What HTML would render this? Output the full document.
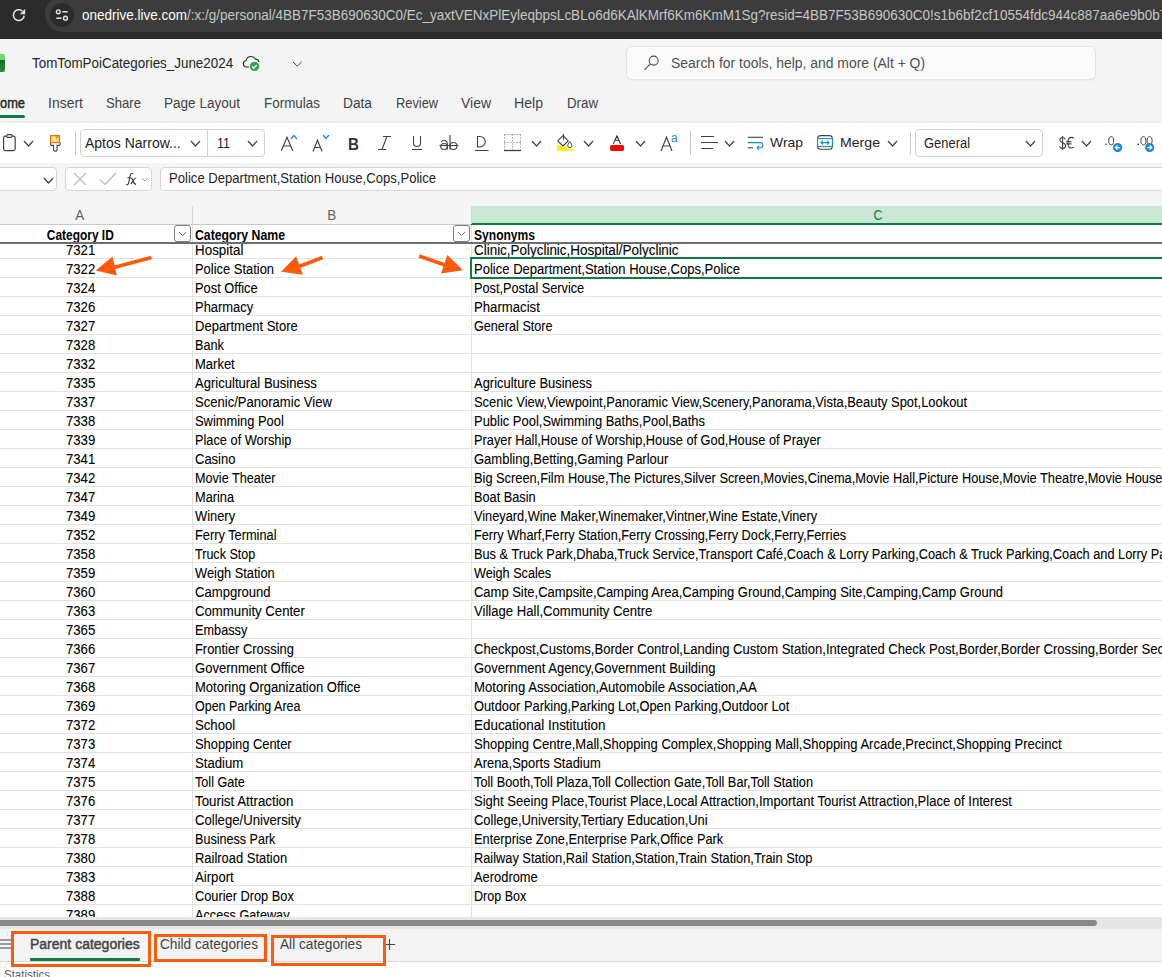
<!DOCTYPE html><html><head><meta charset="utf-8"><style>*{margin:0;padding:0}
html,body{width:1162px;height:977px;overflow:hidden;background:#f5f5f5;font-family:"Liberation Sans",sans-serif;position:relative}
.b{position:absolute}
.t{position:absolute;white-space:nowrap;line-height:1;transform-origin:0 0}
.g .t{-webkit-text-stroke:0.1px #000}
</style></head><body>
<div class="b" style="left:0px;top:0px;width:1162px;height:39px;background:#2b2b2b"></div>
<div class="b" style="left:45px;top:-4px;width:1200px;height:36px;background:#3c3c3c;border-radius:18px"></div>
<div class="b" style="left:50px;top:3px;width:24px;height:24px;background:#2b2b2b;border-radius:12px"></div>
<svg class="b" style="left:11px;top:7px" width="16" height="16" viewBox="0 0 16 16"><path d="M13.2 8.6a5.4 5.4 0 1 1 -1.9-4.6" fill="none" stroke="#e3e3e3" stroke-width="1.5"/><path d="M14.2 1.8v5.4h-5.4z" fill="#e3e3e3"/></svg>
<svg class="b" style="left:54px;top:7px" width="16" height="16" viewBox="0 0 16 16"><circle cx="4.3" cy="4.8" r="1.9" fill="none" stroke="#e3e3e3" stroke-width="1.4"/><path d="M8.3 4.8h5.4" stroke="#e3e3e3" stroke-width="1.5"/><circle cx="11.5" cy="11.2" r="1.9" fill="none" stroke="#e3e3e3" stroke-width="1.4"/><path d="M2.3 11.2h5.3" stroke="#e3e3e3" stroke-width="1.5"/></svg>
<div class="t" style="left:82px;top:8.35px;font-size:14px;color:#c4c7c5;transform:scaleX(0.964)"><span style="color:#fff">onedrive.live.com</span>/:x:/g/personal/4BB7F53B690630C0/Ec_yaxtVENxPlEyleqbpsLcBLo6d6KAlKMrf6Km6KmM1Sg?resid=4BB7F53B690630C0!s1b6bf2cf10554fdc944c887aa6e9b0b7</div>
<div class="b" style="left:0px;top:39px;width:1162px;height:84px;background:#f4f4f4"></div>
<div class="b" style="left:0px;top:54px;width:5px;height:18px;background:linear-gradient(#6fd96f 0,#6fd96f 33%,#1a6b2c 34%,#2f8f3f 100%);border-radius:0 2px 2px 0"></div>
<div class="t" style="left:32px;top:56.15px;font-size:14px;color:#242424;transform:scaleX(0.9570);">TomTomPoiCategories_June2024</div>
<svg class="b" style="left:240px;top:53px" width="22" height="20" viewBox="240 53 22 20"><path d="M249 67H246.6a3.3 3.3 0 0 1 -0.5-6.55a5 5 0 0 1 9.3-1.3a3.4 3.4 0 0 1 3.4 2.9" fill="none" stroke="#2a2a2a" stroke-width="1.1"/><circle cx="254.5" cy="66.4" r="4.7" fill="#34a551"/><path d="M252.2 66.5l1.6 1.6l2.9-3.1" fill="none" stroke="#fff" stroke-width="1.2"/></svg>
<svg class="b" style="left:292px;top:61px" width="11" height="7" viewBox="0 0 11 7"><path d="M1 1l4.3 4.2 4.3-4.2" fill="none" stroke="#424242" stroke-width="1"/></svg>
<div class="b" style="left:627px;top:47px;width:468px;height:32px;background:#fafafa;border-radius:5px;box-shadow:0 0 0 1px #e3e3e3,0 1px 2px rgba(0,0,0,0.12)"></div>
<svg class="b" style="left:640px;top:52px" width="20" height="20" viewBox="640 52 20 20"><circle cx="653.7" cy="60.6" r="4.5" fill="none" stroke="#4a4a4a" stroke-width="1.05"/><path d="M650.4 63.9L644.4 69.9" stroke="#4a4a4a" stroke-width="1.05"/></svg>
<div class="t" style="left:671px;top:56.15px;font-size:14px;color:#505050;transform:scaleX(0.9940);">Search for tools, help, and more (Alt + Q)</div>
<div class="t" style="left:0px;top:96.15px;font-size:14px;color:#242424;transform:scaleX(0.9185);-webkit-text-stroke:0.45px #242424;">ome</div>
<div class="t" style="left:48px;top:96.15px;font-size:14px;color:#424242;">Insert</div>
<div class="t" style="left:106px;top:96.15px;font-size:14px;color:#424242;transform:scaleX(0.9372);">Share</div>
<div class="t" style="left:164px;top:96.15px;font-size:14px;color:#424242;transform:scaleX(0.9670);">Page Layout</div>
<div class="t" style="left:264px;top:96.15px;font-size:14px;color:#424242;transform:scaleX(0.9603);">Formulas</div>
<div class="t" style="left:343px;top:96.15px;font-size:14px;color:#424242;transform:scaleX(0.9810);">Data</div>
<div class="t" style="left:396px;top:96.15px;font-size:14px;color:#424242;transform:scaleX(0.9152);">Review</div>
<div class="t" style="left:461px;top:96.15px;font-size:14px;color:#424242;">View</div>
<div class="t" style="left:514px;top:96.15px;font-size:14px;color:#424242;transform:scaleX(1.0076);">Help</div>
<div class="t" style="left:567px;top:96.15px;font-size:14px;color:#424242;transform:scaleX(0.9493);">Draw</div>
<div class="b" style="left:0px;top:115px;width:25px;height:3px;background:#107c41;border-radius:0 2px 2px 0"></div>
<div class="b" style="left:0px;top:123px;width:1162px;height:40px;background:#fff;box-shadow:0 1px 3px rgba(0,0,0,0.22)"></div>
<svg class="b" style="left:2px;top:133px" width="16" height="19" viewBox="0 0 16 19"><rect x="1.6" y="3.2" width="11.6" height="14.4" rx="1.8" fill="none" stroke="#424242" stroke-width="1.2"/><rect x="4.6" y="1.6" width="5.6" height="2.8" rx="1.4" fill="#fff" stroke="#424242" stroke-width="1.1"/></svg>
<svg class="b" style="left:23px;top:140px" width="11" height="7" viewBox="0 0 11 7"><path d="M1 1L5.5 6L10 1" fill="none" stroke="#424242" stroke-width="1.2"/></svg>
<svg class="b" style="left:48px;top:133px" width="14" height="20" viewBox="48 133 14 20"><path d="M50.5 142.6v1.6a1.2 1.2 0 0 0 1.2 1.2h1.9v4.4a1.3 1.3 0 0 0 1.3 1.3h0.9a1.3 1.3 0 0 0 1.3-1.3v-4.4h1.9a1.2 1.2 0 0 0 1.2-1.2v-1.6" fill="#fff" stroke="#424242" stroke-width="1.1"/><rect x="50.6" y="135.6" width="8.9" height="7" fill="#f8df8e" stroke="#e27600" stroke-width="1.2"/><path d="M56.3 135.6v3.3M58 135.6v2.2" stroke="#e27600" stroke-width="0.9"/></svg>
<div class="b" style="left:75px;top:131px;width:1px;height:24px;background:#c8c8c8"></div>
<div class="b" style="left:80px;top:129px;width:185px;height:28px;border:1px solid #d1d1d1;border-radius:4px;box-sizing:border-box;background:#fff"></div>
<div class="b" style="left:207px;top:130px;width:1px;height:26px;background:#d1d1d1"></div>
<div class="t" style="left:85px;top:136.15px;font-size:14px;color:#242424;">Aptos Narrow...</div>
<svg class="b" style="left:190px;top:140px" width="11" height="7" viewBox="0 0 11 7"><path d="M1 1L5.5 6L10 1" fill="none" stroke="#424242" stroke-width="1.2"/></svg>
<div class="t" style="left:217px;top:136.15px;font-size:14px;color:#242424;transform:scaleX(0.8946);">11</div>
<svg class="b" style="left:247px;top:140px" width="11" height="7" viewBox="0 0 11 7"><path d="M1 1L5.5 6L10 1" fill="none" stroke="#424242" stroke-width="1.2"/></svg>
<svg class="b" style="left:280px;top:136px" width="14" height="16" viewBox="0 0 14 16"><path d="M1.2 15L7 1.2L12.8 15M3.3 10h7.4" fill="none" stroke="#424242" stroke-width="1.15"/></svg>
<svg class="b" style="left:290px;top:134px" width="8" height="6" viewBox="0 0 8 6"><path d="M1 5L4 1.5L7 5" fill="none" stroke="#1e88d8" stroke-width="1.3"/></svg>
<svg class="b" style="left:312px;top:139px" width="11" height="13" viewBox="0 0 11 13"><path d="M1 12.5L5.5 1.2L10 12.5M2.7 8.5h5.6" fill="none" stroke="#424242" stroke-width="1.15"/></svg>
<svg class="b" style="left:322px;top:134px" width="8" height="6" viewBox="0 0 8 6"><path d="M1 1L4 4.5L7 1" fill="none" stroke="#1e88d8" stroke-width="1.3"/></svg>
<div class="t" style="left:348px;top:135.61px;font-size:17px;font-weight:bold;color:#333;transform:scaleX(0.8957);">B</div>
<svg class="b" style="left:377px;top:135px" width="15" height="16" viewBox="0 0 15 16"><path d="M6 1.5h8M1 14.5h8M10 1.5L5 14.5" fill="none" stroke="#424242" stroke-width="1.1"/></svg>
<svg class="b" style="left:411px;top:135px" width="12" height="16" viewBox="0 0 12 16"><path d="M2.5 1v7a3.5 3.5 0 0 0 7 0V1" fill="none" stroke="#424242" stroke-width="1.1"/><path d="M1 14.5h10" stroke="#424242" stroke-width="1"/></svg>
<svg class="b" style="left:439px;top:134px" width="20" height="17" viewBox="0 0 20 17"><path d="M2.3 8a3.2 3.2 0 0 1 6 1.5v6" fill="none" stroke="#424242" stroke-width="1.1"/><ellipse cx="5" cy="12.5" rx="3.3" ry="3" fill="none" stroke="#424242" stroke-width="1.1"/><path d="M11 1v14.5" fill="none" stroke="#424242" stroke-width="1.1"/><ellipse cx="14.5" cy="12" rx="3.5" ry="3.5" fill="none" stroke="#424242" stroke-width="1.1"/><path d="M0.5 11.5h19" stroke="#424242" stroke-width="1.1"/></svg>
<svg class="b" style="left:474px;top:134px" width="16" height="18" viewBox="0 0 16 18"><path d="M3.5 2.5h2.5a4.6 4.6 0 0 1 0 10.5h-2.5z" fill="none" stroke="#424242" stroke-width="1.1"/><path d="M1 16.5h13.5" stroke="#424242" stroke-width="1"/></svg>
<svg class="b" style="left:503px;top:133px" width="19" height="19" viewBox="0 0 19 19"><path d="M1.5 1.5h16M1.5 9.5h16M1.5 1.5v16M9.5 1.5v16M17.5 1.5v16" fill="none" stroke="#707070" stroke-width="1" stroke-dasharray="1 2"/><path d="M1 17.5h17" stroke="#424242" stroke-width="1.3"/></svg>
<svg class="b" style="left:531px;top:140px" width="11" height="7" viewBox="0 0 11 7"><path d="M1 1L5.5 6L10 1" fill="none" stroke="#424242" stroke-width="1.2"/></svg>
<svg class="b" style="left:554px;top:132px" width="22" height="21" viewBox="554 132 22 21"><rect x="557" y="145" width="16" height="6" rx="1.5" fill="#ffef00"/><path d="M557.8 140.8L563 135.6L568.2 140.8L563 146z" fill="#fff" stroke="#fff" stroke-width="3" stroke-linejoin="round"/><path d="M569.8 141.6c-1.2 1.8-2.1 2.9-2.1 4a2.1 2.1 0 0 0 4.2 0c0-1.1-.9-2.2-2.1-4z" fill="#fff" stroke="#fff" stroke-width="3"/><path d="M557.8 140.8L563 135.6L568.2 140.8L563 146z" fill="none" stroke="#424242" stroke-width="1.1" stroke-linejoin="round"/><path d="M563.5 133.8v6" stroke="#424242" stroke-width="1.1"/><path d="M569.8 141.6c-1.2 1.8-2.1 2.9-2.1 4a2.1 2.1 0 0 0 4.2 0c0-1.1-.9-2.2-2.1-4z" fill="none" stroke="#424242" stroke-width="1"/></svg>
<svg class="b" style="left:583px;top:140px" width="11" height="7" viewBox="0 0 11 7"><path d="M1 1L5.5 6L10 1" fill="none" stroke="#424242" stroke-width="1.2"/></svg>
<svg class="b" style="left:609px;top:133px" width="16" height="19" viewBox="0 0 16 19"><path d="M4.5 10.4L7.9 2.7L11.4 10.4M6 7.3h3.9" fill="none" stroke="#333" stroke-width="1.1" stroke-linecap="round" stroke-linejoin="round"/><rect x="1.1" y="12.1" width="13.9" height="5.8" rx="1.6" fill="#ff0000"/></svg>
<svg class="b" style="left:635px;top:140px" width="11" height="7" viewBox="0 0 11 7"><path d="M1 1L5.5 6L10 1" fill="none" stroke="#424242" stroke-width="1.2"/></svg>
<svg class="b" style="left:660px;top:136px" width="13" height="16" viewBox="0 0 13 16"><path d="M1 15L6.5 1.2L12 15M3 10h7" fill="none" stroke="#424242" stroke-width="1.15"/></svg>
<div class="t" style="left:671.3px;top:132.14px;font-size:12px;color:#1e88d8;transform:scaleX(0.9742);">a</div>
<div class="b" style="left:690px;top:131px;width:1px;height:24px;background:#c8c8c8"></div>
<svg class="b" style="left:700px;top:134px" width="20" height="17" viewBox="0 0 20 17"><path d="M1 2.5h13M1 8.5h17M1 14.5h12" stroke="#424242" stroke-width="1.2"/></svg>
<svg class="b" style="left:724px;top:140px" width="11" height="7" viewBox="0 0 11 7"><path d="M1 1L5.5 6L10 1" fill="none" stroke="#424242" stroke-width="1.2"/></svg>
<svg class="b" style="left:744px;top:132px" width="22" height="20" viewBox="744 132 22 20"><path d="M747.7 137.3h15.4" stroke="#424242" stroke-width="1.1"/><path d="M747.7 142.6h12.6a2.6 2.6 0 0 1 0 5.2h-2.8" fill="none" stroke="#1e88d8" stroke-width="1.1"/><path d="M759 145.9l-1.9 1.9l1.9 1.9" fill="none" stroke="#1e88d8" stroke-width="1.1"/><path d="M747.7 147.8h5.2" stroke="#424242" stroke-width="1.1"/></svg>
<div class="t" style="left:770px;top:136.07px;font-size:13.5px;color:#242424;transform:scaleX(1.0307);">Wrap</div>
<svg class="b" style="left:815px;top:133px" width="20" height="19" viewBox="815 133 20 19"><rect x="817.6" y="135.6" width="14.8" height="13.6" rx="3" fill="none" stroke="#424242" stroke-width="1.05"/><rect x="817.6" y="138.6" width="14.8" height="7.9" fill="#fff" stroke="#1e88d8" stroke-width="1.1"/><path d="M821 142.6h8M822.9 140.7l-1.9 1.9l1.9 1.9M827.1 140.7l1.9 1.9l-1.9 1.9" fill="none" stroke="#1e88d8" stroke-width="1.1"/></svg>
<div class="t" style="left:840px;top:136.07px;font-size:13.5px;color:#242424;transform:scaleX(1.0445);">Merge</div>
<svg class="b" style="left:887px;top:140px" width="11" height="7" viewBox="0 0 11 7"><path d="M1 1L5.5 6L10 1" fill="none" stroke="#424242" stroke-width="1.2"/></svg>
<div class="b" style="left:910px;top:132px;width:1px;height:22px;background:#c8c8c8"></div>
<div class="b" style="left:915px;top:129px;width:128px;height:28px;border:1px solid #d1d1d1;border-radius:4px;box-sizing:border-box;background:#fff"></div>
<div class="t" style="left:924px;top:136.15px;font-size:14px;color:#242424;transform:scaleX(0.9240);">General</div>
<svg class="b" style="left:1025px;top:140px" width="11" height="7" viewBox="0 0 11 7"><path d="M1 1L5.5 6L10 1" fill="none" stroke="#424242" stroke-width="1.2"/></svg>
<svg class="b" style="left:1056px;top:133px" width="22" height="20" viewBox="1056 133 22 20"><path d="M1065.3 139.3c-0.5-1.2-1.5-1.8-2.8-1.8c-1.6 0-2.7 1-2.7 2.4c0 3.3 5.8 2.2 5.8 5.8c0 1.6-1.2 2.7-3 2.7c-1.4 0-2.5-0.7-3.1-2M1062.6 136v14" fill="none" stroke="#424242" stroke-width="1.1"/><path d="M1074 138.3c-0.7-0.6-1.5-0.9-2.4-0.9c-2.3 0-3.8 2.1-3.8 5.3s1.5 5.3 3.8 5.3c0.9 0 1.7-0.3 2.4-0.9M1066.3 141.6h5.2M1066.3 143.9h5.2" fill="none" stroke="#424242" stroke-width="1.1"/></svg>
<svg class="b" style="left:1081px;top:140px" width="11" height="7" viewBox="0 0 11 7"><path d="M1 1L5.5 6L10 1" fill="none" stroke="#424242" stroke-width="1.2"/></svg>
<svg class="b" style="left:1100px;top:132px" width="62" height="22" viewBox="1100 132 62 22"><circle cx="1106" cy="144.3" r="0.9" fill="#424242"/><ellipse cx="1111.2" cy="140.8" rx="2.5" ry="4.1" fill="none" stroke="#424242" stroke-width="1"/><circle cx="1138.2" cy="144.3" r="0.9" fill="#424242"/><ellipse cx="1143.4" cy="140.8" rx="2.5" ry="4.1" fill="none" stroke="#424242" stroke-width="1"/><ellipse cx="1149.6" cy="140.8" rx="2.5" ry="4.1" fill="none" stroke="#424242" stroke-width="1"/><circle cx="1117.6" cy="147.6" r="4.6" fill="#1e88d8"/><path d="M1120 147.6h-4.6M1117.5 145.5l-2.1 2.1l2.1 2.1" fill="none" stroke="#fff" stroke-width="1.1"/><circle cx="1149.6" cy="147.6" r="4.6" fill="#1e88d8"/><path d="M1147.2 147.6h4.6M1149.7 145.5l2.1 2.1l-2.1 2.1" fill="none" stroke="#fff" stroke-width="1.1"/></svg>
<div class="b" style="left:0px;top:163px;width:1162px;height:28px;background:#f5f5f5"></div>
<div class="b" style="left:-10px;top:167px;width:67px;height:24px;border:1px solid #d6d6d6;border-radius:4px;box-sizing:border-box;background:#fff"></div>
<svg class="b" style="left:43px;top:177px" width="11" height="7" viewBox="0 0 11 7"><path d="M1 1L5.5 6L10 1" fill="none" stroke="#424242" stroke-width="1.2"/></svg>
<div class="b" style="left:65px;top:167px;width:87px;height:24px;border:1px solid #d6d6d6;border-radius:4px;box-sizing:border-box;background:#fff"></div>
<svg class="b" style="left:73px;top:172px" width="14" height="14" viewBox="0 0 14 14"><path d="M1 1l12 12M13 1L1 13" stroke="#bdbdbd" stroke-width="1.3"/></svg>
<svg class="b" style="left:99px;top:172px" width="18" height="14" viewBox="0 0 18 14"><path d="M1 7.5L6 12.5L17 1" fill="none" stroke="#bdbdbd" stroke-width="1.3"/></svg>
<svg class="b" style="left:122px;top:168px" width="18" height="20" viewBox="122 168 18 20"><path d="M133.2 173.7c-1.3-0.8-2.6-0.4-2.9 1.2L128.5 183.4c-0.3 1.1-1.1 1.5-2.3 1.1M127.4 177.7h3.4" fill="none" stroke="#424242" stroke-width="1.1"/><path d="M130.6 178.0c1.4 0 2 1 2.6 3c0.6 2 1.3 3.3 2.9 3.3M136.2 178.0c-1.4 0-2.8 1.6-5.4 6.3" fill="none" stroke="#424242" stroke-width="1.2"/></svg>
<svg class="b" style="left:141px;top:177px" width="8" height="5" viewBox="0 0 8 5"><path d="M1 1L4.0 4L7 1" fill="none" stroke="#9e9e9e" stroke-width="1"/></svg>
<div class="b" style="left:160px;top:167px;width:1010px;height:24px;border:1px solid #d6d6d6;border-radius:4px;box-sizing:border-box;background:#fff"></div>
<div class="t" style="left:169px;top:171.15px;font-size:14px;color:#242424;transform:scaleX(0.9352);">Police Department,Station House,Cops,Police</div>
<div class="b" style="left:0px;top:191px;width:1162px;height:33px;background:#f5f5f5"></div>
<div class="b" style="left:471px;top:206px;width:700px;height:17px;background:#c9e7d5"></div>
<div class="b" style="left:471px;top:223px;width:700px;height:2px;background:#107c41"></div>
<div class="b" style="left:0px;top:224px;width:471px;height:1px;background:#c8c8c8"></div>
<div class="b" style="left:192px;top:206px;width:1px;height:18px;background:#d6d6d6"></div>
<div class="b" style="left:471px;top:206px;width:1px;height:18px;background:#d6d6d6"></div>
<div class="t" style="left:75.33px;top:208.15px;font-size:14px;color:#616161;transform:scaleX(0.9632);transform-origin:50% 0;">A</div>
<div class="t" style="left:327.33px;top:208.15px;font-size:14px;color:#616161;transform:scaleX(0.9632);transform-origin:50% 0;">B</div>
<div class="t" style="left:872.95px;top:208.15px;font-size:14px;color:#107c41;transform:scaleX(0.8903);transform-origin:50% 0;">C</div>
<div class="b g" style="left:0;top:244px;width:1162px;height:673px;overflow:hidden;background:#fff">
<div class="b" style="left:0px;top:14px;width:1162px;height:1px;background:#e1e1e1"></div>
<div class="t" style="left:64.84px;top:-1.05px;font-size:14px;color:#000;transform:scaleX(0.9400);transform-origin:50% 0;">7321</div>
<div class="t" style="left:195px;top:-1.05px;font-size:14px;color:#000;transform:scaleX(0.9572);">Hospital</div>
<div class="t" style="left:474px;top:-1.05px;font-size:14px;color:#000;transform:scaleX(0.9595);">Clinic,Polyclinic,Hospital/Polyclinic</div>
<div class="b" style="left:0px;top:33px;width:1162px;height:1px;background:#e1e1e1"></div>
<div class="t" style="left:64.84px;top:17.95px;font-size:14px;color:#000;transform:scaleX(0.9400);transform-origin:50% 0;">7322</div>
<div class="t" style="left:195px;top:17.95px;font-size:14px;color:#000;transform:scaleX(0.9230);">Police Station</div>
<div class="t" style="left:474px;top:17.95px;font-size:14px;color:#000;transform:scaleX(0.9316);">Police Department,Station House,Cops,Police</div>
<div class="b" style="left:0px;top:52px;width:1162px;height:1px;background:#e1e1e1"></div>
<div class="t" style="left:64.84px;top:36.95px;font-size:14px;color:#000;transform:scaleX(0.9400);transform-origin:50% 0;">7324</div>
<div class="t" style="left:195px;top:36.95px;font-size:14px;color:#000;transform:scaleX(0.9191);">Post Office</div>
<div class="t" style="left:474px;top:36.95px;font-size:14px;color:#000;transform:scaleX(0.9071);">Post,Postal Service</div>
<div class="b" style="left:0px;top:71px;width:1162px;height:1px;background:#e1e1e1"></div>
<div class="t" style="left:64.84px;top:55.95px;font-size:14px;color:#000;transform:scaleX(0.9400);transform-origin:50% 0;">7326</div>
<div class="t" style="left:195px;top:55.95px;font-size:14px;color:#000;transform:scaleX(0.9238);">Pharmacy</div>
<div class="t" style="left:474px;top:55.95px;font-size:14px;color:#000;transform:scaleX(0.9400);">Pharmacist</div>
<div class="b" style="left:0px;top:90px;width:1162px;height:1px;background:#e1e1e1"></div>
<div class="t" style="left:64.84px;top:74.95px;font-size:14px;color:#000;transform:scaleX(0.9400);transform-origin:50% 0;">7327</div>
<div class="t" style="left:195px;top:74.95px;font-size:14px;color:#000;transform:scaleX(0.9298);">Department Store</div>
<div class="t" style="left:474px;top:74.95px;font-size:14px;color:#000;transform:scaleX(0.9010);">General Store</div>
<div class="b" style="left:0px;top:109px;width:1162px;height:1px;background:#e1e1e1"></div>
<div class="t" style="left:64.84px;top:93.95px;font-size:14px;color:#000;transform:scaleX(0.9400);transform-origin:50% 0;">7328</div>
<div class="t" style="left:195px;top:93.95px;font-size:14px;color:#000;transform:scaleX(0.9058);">Bank</div>
<div class="b" style="left:0px;top:128px;width:1162px;height:1px;background:#e1e1e1"></div>
<div class="t" style="left:64.84px;top:112.95px;font-size:14px;color:#000;transform:scaleX(0.9400);transform-origin:50% 0;">7332</div>
<div class="t" style="left:195px;top:112.95px;font-size:14px;color:#000;transform:scaleX(0.9283);">Market</div>
<div class="b" style="left:0px;top:147px;width:1162px;height:1px;background:#e1e1e1"></div>
<div class="t" style="left:64.84px;top:131.95px;font-size:14px;color:#000;transform:scaleX(0.9400);transform-origin:50% 0;">7335</div>
<div class="t" style="left:195px;top:131.95px;font-size:14px;color:#000;transform:scaleX(0.9320);">Agricultural Business</div>
<div class="t" style="left:474px;top:131.95px;font-size:14px;color:#000;transform:scaleX(0.9241);">Agriculture Business</div>
<div class="b" style="left:0px;top:166px;width:1162px;height:1px;background:#e1e1e1"></div>
<div class="t" style="left:64.84px;top:150.95px;font-size:14px;color:#000;transform:scaleX(0.9400);transform-origin:50% 0;">7337</div>
<div class="t" style="left:195px;top:150.95px;font-size:14px;color:#000;transform:scaleX(0.9320);">Scenic/Panoramic View</div>
<div class="t" style="left:474px;top:150.95px;font-size:14px;color:#000;transform:scaleX(0.9218);">Scenic View,Viewpoint,Panoramic View,Scenery,Panorama,Vista,Beauty Spot,Lookout</div>
<div class="b" style="left:0px;top:185px;width:1162px;height:1px;background:#e1e1e1"></div>
<div class="t" style="left:64.84px;top:169.95px;font-size:14px;color:#000;transform:scaleX(0.9400);transform-origin:50% 0;">7338</div>
<div class="t" style="left:195px;top:169.95px;font-size:14px;color:#000;transform:scaleX(0.9207);">Swimming Pool</div>
<div class="t" style="left:474px;top:169.95px;font-size:14px;color:#000;transform:scaleX(0.9249);">Public Pool,Swimming Baths,Pool,Baths</div>
<div class="b" style="left:0px;top:204px;width:1162px;height:1px;background:#e1e1e1"></div>
<div class="t" style="left:64.84px;top:188.95px;font-size:14px;color:#000;transform:scaleX(0.9400);transform-origin:50% 0;">7339</div>
<div class="t" style="left:195px;top:188.95px;font-size:14px;color:#000;transform:scaleX(0.9133);">Place of Worship</div>
<div class="t" style="left:474px;top:188.95px;font-size:14px;color:#000;transform:scaleX(0.9139);">Prayer Hall,House of Worship,House of God,House of Prayer</div>
<div class="b" style="left:0px;top:223px;width:1162px;height:1px;background:#e1e1e1"></div>
<div class="t" style="left:64.84px;top:207.95px;font-size:14px;color:#000;transform:scaleX(0.9400);transform-origin:50% 0;">7341</div>
<div class="t" style="left:195px;top:207.95px;font-size:14px;color:#000;transform:scaleX(0.9274);">Casino</div>
<div class="t" style="left:474px;top:207.95px;font-size:14px;color:#000;transform:scaleX(0.9286);">Gambling,Betting,Gaming Parlour</div>
<div class="b" style="left:0px;top:242px;width:1162px;height:1px;background:#e1e1e1"></div>
<div class="t" style="left:64.84px;top:226.95px;font-size:14px;color:#000;transform:scaleX(0.9400);transform-origin:50% 0;">7342</div>
<div class="t" style="left:195px;top:226.95px;font-size:14px;color:#000;transform:scaleX(0.9015);">Movie Theater</div>
<div class="t" style="left:474px;top:226.95px;font-size:14px;color:#000;transform:scaleX(0.9143);">Big Screen,Film House,The Pictures,Silver Screen,Movies,Cinema,Movie Hall,Picture House,Movie Theatre,Movie House</div>
<div class="b" style="left:0px;top:261px;width:1162px;height:1px;background:#e1e1e1"></div>
<div class="t" style="left:64.84px;top:245.95px;font-size:14px;color:#000;transform:scaleX(0.9400);transform-origin:50% 0;">7347</div>
<div class="t" style="left:195px;top:245.95px;font-size:14px;color:#000;transform:scaleX(0.9119);">Marina</div>
<div class="t" style="left:474px;top:245.95px;font-size:14px;color:#000;transform:scaleX(0.9099);">Boat Basin</div>
<div class="b" style="left:0px;top:280px;width:1162px;height:1px;background:#e1e1e1"></div>
<div class="t" style="left:64.84px;top:264.95px;font-size:14px;color:#000;transform:scaleX(0.9400);transform-origin:50% 0;">7349</div>
<div class="t" style="left:195px;top:264.95px;font-size:14px;color:#000;transform:scaleX(0.9208);">Winery</div>
<div class="t" style="left:474px;top:264.95px;font-size:14px;color:#000;transform:scaleX(0.9109);">Vineyard,Wine Maker,Winemaker,Vintner,Wine Estate,Vinery</div>
<div class="b" style="left:0px;top:299px;width:1162px;height:1px;background:#e1e1e1"></div>
<div class="t" style="left:64.84px;top:283.95px;font-size:14px;color:#000;transform:scaleX(0.9400);transform-origin:50% 0;">7352</div>
<div class="t" style="left:195px;top:283.95px;font-size:14px;color:#000;transform:scaleX(0.9141);">Ferry Terminal</div>
<div class="t" style="left:474px;top:283.95px;font-size:14px;color:#000;transform:scaleX(0.9101);">Ferry Wharf,Ferry Station,Ferry Crossing,Ferry Dock,Ferry,Ferries</div>
<div class="b" style="left:0px;top:318px;width:1162px;height:1px;background:#e1e1e1"></div>
<div class="t" style="left:64.84px;top:302.95px;font-size:14px;color:#000;transform:scaleX(0.9400);transform-origin:50% 0;">7358</div>
<div class="t" style="left:195px;top:302.95px;font-size:14px;color:#000;transform:scaleX(0.8964);">Truck Stop</div>
<div class="t" style="left:474px;top:302.95px;font-size:14px;color:#000;transform:scaleX(0.9120);">Bus &amp; Truck Park,Dhaba,Truck Service,Transport Café,Coach &amp; Lorry Parking,Coach &amp; Truck Parking,Coach and Lorry Park</div>
<div class="b" style="left:0px;top:337px;width:1162px;height:1px;background:#e1e1e1"></div>
<div class="t" style="left:64.84px;top:321.95px;font-size:14px;color:#000;transform:scaleX(0.9400);transform-origin:50% 0;">7359</div>
<div class="t" style="left:195px;top:321.95px;font-size:14px;color:#000;transform:scaleX(0.9172);">Weigh Station</div>
<div class="t" style="left:474px;top:321.95px;font-size:14px;color:#000;transform:scaleX(0.9036);">Weigh Scales</div>
<div class="b" style="left:0px;top:356px;width:1162px;height:1px;background:#e1e1e1"></div>
<div class="t" style="left:64.84px;top:340.95px;font-size:14px;color:#000;transform:scaleX(0.9400);transform-origin:50% 0;">7360</div>
<div class="t" style="left:195px;top:340.95px;font-size:14px;color:#000;transform:scaleX(0.9346);">Campground</div>
<div class="t" style="left:474px;top:340.95px;font-size:14px;color:#000;transform:scaleX(0.9263);">Camp Site,Campsite,Camping Area,Camping Ground,Camping Site,Camping,Camp Ground</div>
<div class="b" style="left:0px;top:375px;width:1162px;height:1px;background:#e1e1e1"></div>
<div class="t" style="left:64.84px;top:359.95px;font-size:14px;color:#000;transform:scaleX(0.9400);transform-origin:50% 0;">7363</div>
<div class="t" style="left:195px;top:359.95px;font-size:14px;color:#000;transform:scaleX(0.9412);">Community Center</div>
<div class="t" style="left:474px;top:359.95px;font-size:14px;color:#000;transform:scaleX(0.9369);">Village Hall,Community Centre</div>
<div class="b" style="left:0px;top:394px;width:1162px;height:1px;background:#e1e1e1"></div>
<div class="t" style="left:64.84px;top:378.95px;font-size:14px;color:#000;transform:scaleX(0.9400);transform-origin:50% 0;">7365</div>
<div class="t" style="left:195px;top:378.95px;font-size:14px;color:#000;transform:scaleX(0.9086);">Embassy</div>
<div class="b" style="left:0px;top:413px;width:1162px;height:1px;background:#e1e1e1"></div>
<div class="t" style="left:64.84px;top:397.95px;font-size:14px;color:#000;transform:scaleX(0.9400);transform-origin:50% 0;">7366</div>
<div class="t" style="left:195px;top:397.95px;font-size:14px;color:#000;transform:scaleX(0.9207);">Frontier Crossing</div>
<div class="t" style="left:474px;top:397.95px;font-size:14px;color:#000;transform:scaleX(0.9324);">Checkpost,Customs,Border Control,Landing Custom Station,Integrated Check Post,Border,Border Crossing,Border Security</div>
<div class="b" style="left:0px;top:432px;width:1162px;height:1px;background:#e1e1e1"></div>
<div class="t" style="left:64.84px;top:416.95px;font-size:14px;color:#000;transform:scaleX(0.9400);transform-origin:50% 0;">7367</div>
<div class="t" style="left:195px;top:416.95px;font-size:14px;color:#000;transform:scaleX(0.9343);">Government Office</div>
<div class="t" style="left:474px;top:416.95px;font-size:14px;color:#000;transform:scaleX(0.9268);">Government Agency,Government Building</div>
<div class="b" style="left:0px;top:451px;width:1162px;height:1px;background:#e1e1e1"></div>
<div class="t" style="left:64.84px;top:435.95px;font-size:14px;color:#000;transform:scaleX(0.9400);transform-origin:50% 0;">7368</div>
<div class="t" style="left:195px;top:435.95px;font-size:14px;color:#000;transform:scaleX(0.9304);">Motoring Organization Office</div>
<div class="t" style="left:474px;top:435.95px;font-size:14px;color:#000;transform:scaleX(0.9410);">Motoring Association,Automobile Association,AA</div>
<div class="b" style="left:0px;top:470px;width:1162px;height:1px;background:#e1e1e1"></div>
<div class="t" style="left:64.84px;top:454.95px;font-size:14px;color:#000;transform:scaleX(0.9400);transform-origin:50% 0;">7369</div>
<div class="t" style="left:195px;top:454.95px;font-size:14px;color:#000;transform:scaleX(0.8912);">Open Parking Area</div>
<div class="t" style="left:474px;top:454.95px;font-size:14px;color:#000;transform:scaleX(0.9167);">Outdoor Parking,Parking Lot,Open Parking,Outdoor Lot</div>
<div class="b" style="left:0px;top:489px;width:1162px;height:1px;background:#e1e1e1"></div>
<div class="t" style="left:64.84px;top:473.95px;font-size:14px;color:#000;transform:scaleX(0.9400);transform-origin:50% 0;">7372</div>
<div class="t" style="left:195px;top:473.95px;font-size:14px;color:#000;transform:scaleX(0.9393);">School</div>
<div class="t" style="left:474px;top:473.95px;font-size:14px;color:#000;transform:scaleX(0.9596);">Educational Institution</div>
<div class="b" style="left:0px;top:508px;width:1162px;height:1px;background:#e1e1e1"></div>
<div class="t" style="left:64.84px;top:492.95px;font-size:14px;color:#000;transform:scaleX(0.9400);transform-origin:50% 0;">7373</div>
<div class="t" style="left:195px;top:492.95px;font-size:14px;color:#000;transform:scaleX(0.9197);">Shopping Center</div>
<div class="t" style="left:474px;top:492.95px;font-size:14px;color:#000;transform:scaleX(0.9297);">Shopping Centre,Mall,Shopping Complex,Shopping Mall,Shopping Arcade,Precinct,Shopping Precinct</div>
<div class="b" style="left:0px;top:527px;width:1162px;height:1px;background:#e1e1e1"></div>
<div class="t" style="left:64.84px;top:511.95px;font-size:14px;color:#000;transform:scaleX(0.9400);transform-origin:50% 0;">7374</div>
<div class="t" style="left:195px;top:511.95px;font-size:14px;color:#000;transform:scaleX(0.9407);">Stadium</div>
<div class="t" style="left:474px;top:511.95px;font-size:14px;color:#000;transform:scaleX(0.9253);">Arena,Sports Stadium</div>
<div class="b" style="left:0px;top:546px;width:1162px;height:1px;background:#e1e1e1"></div>
<div class="t" style="left:64.84px;top:530.95px;font-size:14px;color:#000;transform:scaleX(0.9400);transform-origin:50% 0;">7375</div>
<div class="t" style="left:195px;top:530.95px;font-size:14px;color:#000;transform:scaleX(0.9016);">Toll Gate</div>
<div class="t" style="left:474px;top:530.95px;font-size:14px;color:#000;transform:scaleX(0.9113);">Toll Booth,Toll Plaza,Toll Collection Gate,Toll Bar,Toll Station</div>
<div class="b" style="left:0px;top:565px;width:1162px;height:1px;background:#e1e1e1"></div>
<div class="t" style="left:64.84px;top:549.95px;font-size:14px;color:#000;transform:scaleX(0.9400);transform-origin:50% 0;">7376</div>
<div class="t" style="left:195px;top:549.95px;font-size:14px;color:#000;transform:scaleX(0.9510);">Tourist Attraction</div>
<div class="t" style="left:474px;top:549.95px;font-size:14px;color:#000;transform:scaleX(0.9318);">Sight Seeing Place,Tourist Place,Local Attraction,Important Tourist Attraction,Place of Interest</div>
<div class="b" style="left:0px;top:584px;width:1162px;height:1px;background:#e1e1e1"></div>
<div class="t" style="left:64.84px;top:568.95px;font-size:14px;color:#000;transform:scaleX(0.9400);transform-origin:50% 0;">7377</div>
<div class="t" style="left:195px;top:568.95px;font-size:14px;color:#000;transform:scaleX(0.9381);">College/University</div>
<div class="t" style="left:474px;top:568.95px;font-size:14px;color:#000;transform:scaleX(0.9250);">College,University,Tertiary Education,Uni</div>
<div class="b" style="left:0px;top:603px;width:1162px;height:1px;background:#e1e1e1"></div>
<div class="t" style="left:64.84px;top:587.95px;font-size:14px;color:#000;transform:scaleX(0.9400);transform-origin:50% 0;">7378</div>
<div class="t" style="left:195px;top:587.95px;font-size:14px;color:#000;transform:scaleX(0.8986);">Business Park</div>
<div class="t" style="left:474px;top:587.95px;font-size:14px;color:#000;transform:scaleX(0.9132);">Enterprise Zone,Enterprise Park,Office Park</div>
<div class="b" style="left:0px;top:622px;width:1162px;height:1px;background:#e1e1e1"></div>
<div class="t" style="left:64.84px;top:606.95px;font-size:14px;color:#000;transform:scaleX(0.9400);transform-origin:50% 0;">7380</div>
<div class="t" style="left:195px;top:606.95px;font-size:14px;color:#000;transform:scaleX(0.9249);">Railroad Station</div>
<div class="t" style="left:474px;top:606.95px;font-size:14px;color:#000;transform:scaleX(0.9144);">Railway Station,Rail Station,Station,Train Station,Train Stop</div>
<div class="b" style="left:0px;top:641px;width:1162px;height:1px;background:#e1e1e1"></div>
<div class="t" style="left:64.84px;top:625.95px;font-size:14px;color:#000;transform:scaleX(0.9400);transform-origin:50% 0;">7383</div>
<div class="t" style="left:195px;top:625.95px;font-size:14px;color:#000;transform:scaleX(0.9389);">Airport</div>
<div class="t" style="left:474px;top:625.95px;font-size:14px;color:#000;transform:scaleX(0.9203);">Aerodrome</div>
<div class="b" style="left:0px;top:660px;width:1162px;height:1px;background:#e1e1e1"></div>
<div class="t" style="left:64.84px;top:644.95px;font-size:14px;color:#000;transform:scaleX(0.9400);transform-origin:50% 0;">7388</div>
<div class="t" style="left:195px;top:644.95px;font-size:14px;color:#000;transform:scaleX(0.9139);">Courier Drop Box</div>
<div class="t" style="left:474px;top:644.95px;font-size:14px;color:#000;transform:scaleX(0.8964);">Drop Box</div>
<div class="b" style="left:0px;top:679px;width:1162px;height:1px;background:#e1e1e1"></div>
<div class="t" style="left:64.84px;top:663.95px;font-size:14px;color:#000;transform:scaleX(0.9400);transform-origin:50% 0;">7389</div>
<div class="t" style="left:195px;top:663.95px;font-size:14px;color:#000;transform:scaleX(0.9065);">Access Gateway</div>
<div class="b" style="left:192px;top:-10px;width:1px;height:700px;background:#e1e1e1"></div>
<div class="b" style="left:471px;top:-10px;width:1px;height:700px;background:#e1e1e1"></div>
</div>
<div class="b" style="left:0px;top:225px;width:1162px;height:17px;background:#fff"></div>
<div class="b" style="left:0px;top:242px;width:1162px;height:2px;background:#6e6e6e"></div>
<div class="b" style="left:192px;top:225px;width:1px;height:17px;background:#e1e1e1"></div>
<div class="b" style="left:471px;top:225px;width:1px;height:17px;background:#e1e1e1"></div>
<div class="b" style="left:0;top:225px;width:1162px;height:17px;overflow:hidden">
<div class="t" style="left:40.73px;top:2.65px;font-size:14px;color:#000;transform:scaleX(0.8530);transform-origin:50% 0;font-weight:bold;">Category ID</div>
<div class="t" style="left:195px;top:2.65px;font-size:14px;font-weight:bold;color:#000;transform:scaleX(0.8766);">Category Name</div>
<div class="t" style="left:474px;top:2.65px;font-size:14px;font-weight:bold;color:#000;transform:scaleX(0.8618);">Synonyms</div>
</div>
<div class="b" style="left:174px;top:225px;width:17px;height:17px;border:1px solid #7a7a7a;border-radius:3px;box-sizing:border-box;background:#fff"></div>
<svg class="b" style="left:178px;top:231px" width="9" height="5.5" viewBox="0 0 9 5.5"><path d="M1 1L4.5 4.5L8 1" fill="none" stroke="#707070" stroke-width="1"/></svg>
<div class="b" style="left:453px;top:225px;width:17px;height:17px;border:1px solid #7a7a7a;border-radius:3px;box-sizing:border-box;background:#fff"></div>
<svg class="b" style="left:457px;top:231px" width="9" height="5.5" viewBox="0 0 9 5.5"><path d="M1 1L4.5 4.5L8 1" fill="none" stroke="#707070" stroke-width="1"/></svg>
<div class="b" style="left:470px;top:257px;width:700px;height:22px;border:2px solid #107c41;box-sizing:border-box"></div>
<svg class="b" style="left:0;top:0" width="1162" height="977"><path d="M151.5 257.5L110 268.5" stroke="#fe5a0e" stroke-width="3.6" stroke-linecap="butt"/><path d="M95.7 270.5L112.6 256.6L116.8 275.6z" fill="#fe5a0e"/></svg>
<svg class="b" style="left:0;top:0" width="1162" height="977"><path d="M322.5 257.5L290 270" stroke="#fe5a0e" stroke-width="3.6" stroke-linecap="butt"/><path d="M281.1 271.7L296.2 256.3L302.8 274.7z" fill="#fe5a0e"/></svg>
<svg class="b" style="left:0;top:0" width="1162" height="977"><path d="M419 256L455 268.5" stroke="#fe5a0e" stroke-width="3.6" stroke-linecap="butt"/><path d="M463 270.3L447.3 254.9L441 273.6z" fill="#fe5a0e"/></svg>
<div class="b" style="left:0px;top:917px;width:1162px;height:12px;background:#e6e6e6"></div>
<div class="b" style="left:-10px;top:920px;width:1107px;height:6px;background:#898989;border-radius:3px"></div>
<div class="b" style="left:0px;top:929px;width:1162px;height:33px;background:#f3f3f3"></div>
<div class="b" style="left:0px;top:961px;width:1162px;height:1px;background:#d6d6d6"></div>
<svg class="b" style="left:0px;top:939px" width="12" height="10" viewBox="0 0 12 10"><path d="M0 1h11M0 5h11M0 9h11" stroke="#424242" stroke-width="1.1"/></svg>
<div class="t" style="left:30px;top:937.15px;font-size:14px;color:#424242;-webkit-text-stroke:0.45px #424242;">Parent categories</div>
<div class="b" style="left:30px;top:958px;width:110px;height:3px;background:#107c41;border-radius:1px"></div>
<div class="t" style="left:160px;top:937.15px;font-size:14px;color:#424242;transform:scaleX(0.9766);">Child categories</div>
<div class="t" style="left:280px;top:937.15px;font-size:14px;color:#424242;transform:scaleX(0.9760);">All categories</div>
<svg class="b" style="left:384px;top:939px" width="11" height="11" viewBox="0 0 11 11"><path d="M5.5 0v11M0 5.5h11" stroke="#424242" stroke-width="1.1"/></svg>
<div class="b" style="left:0px;top:962px;width:1162px;height:15px;background:#fff"></div>
<div class="t" style="left:3.5px;top:968.00px;font-size:13px;color:#616161;transform:scaleX(0.8843);">Statistics</div>
<div class="b" style="left:11px;top:931px;width:140px;height:36px;border:3.5px solid #fe5a0e;box-sizing:border-box"></div>
<div class="b" style="left:154px;top:934px;width:113px;height:28px;border:3.5px solid #fe5a0e;box-sizing:border-box"></div>
<div class="b" style="left:271px;top:935px;width:115px;height:31px;border:3.5px solid #fe5a0e;box-sizing:border-box"></div>
</body></html>
